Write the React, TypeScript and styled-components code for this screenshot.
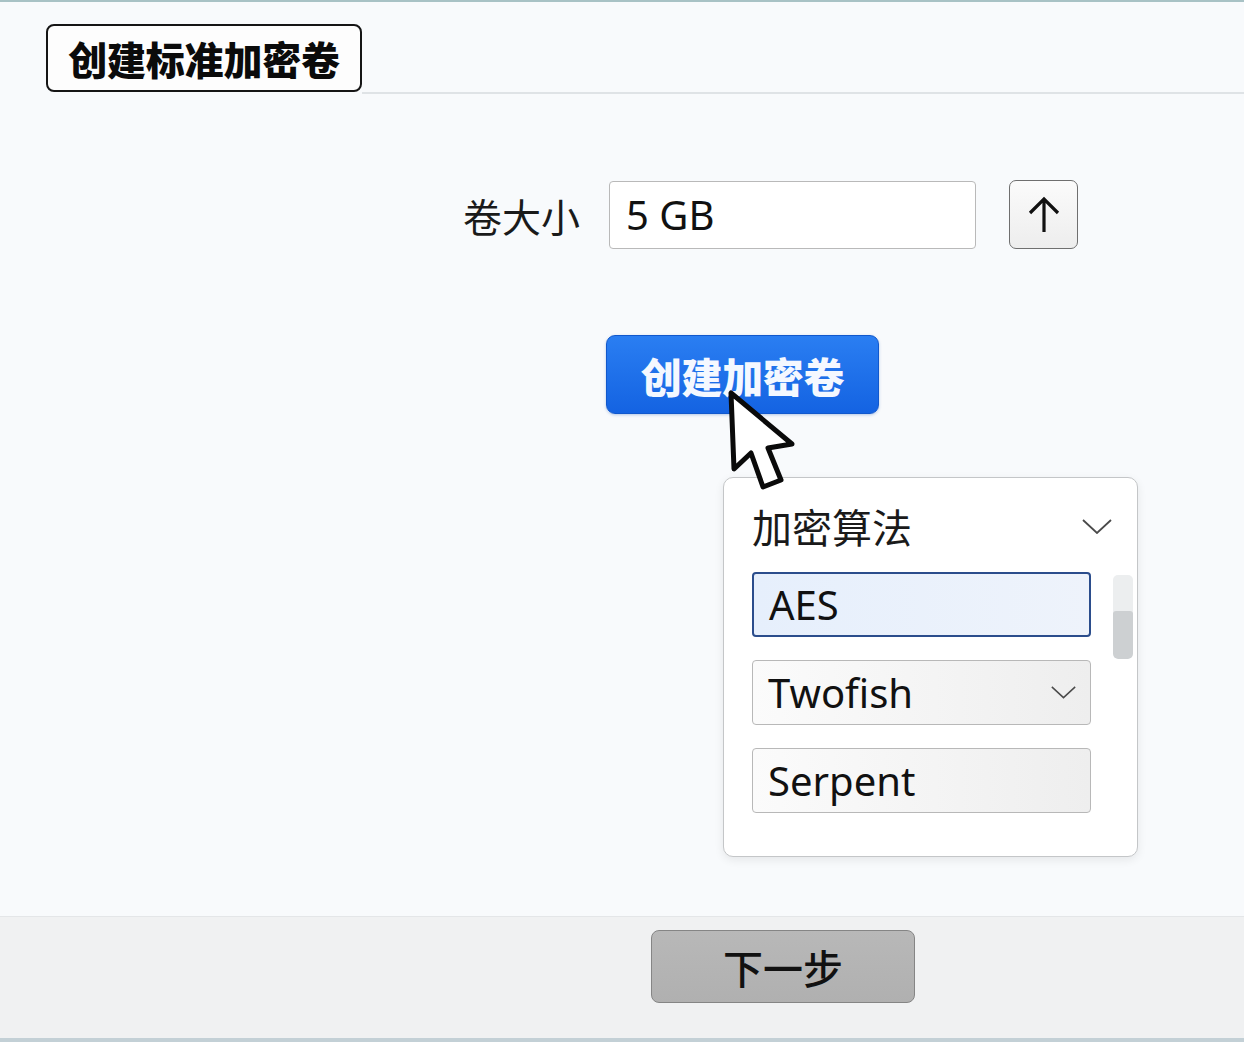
import React from 'react';
import styled, { createGlobalStyle } from 'styled-components';

const GlobalStyle = createGlobalStyle`
  html, body {
    margin: 0;
    padding: 0;
    background: #f8fafc;
  }
  body {
    font-family: "Noto Sans", "Noto Sans CJK SC", sans-serif;
    color: #111;
  }
`;

const Page = styled.div`
  width: 1244px;
  height: 1042px;
  display: flex;
  flex-direction: column;
  background: #f8fafc;
  border-top: 2px solid #a8c2c5;
  box-sizing: border-box;
  overflow: hidden;
`;

const Header = styled.div`
  display: flex;
  align-items: flex-end;
  padding: 22px 0 0 46px;
`;

const TitleBox = styled.div`
  width: 316px;
  height: 68px;
  box-sizing: border-box;
  border: 2px solid #151515;
  border-radius: 8px;
  background: #fdfdfd;
  display: flex;
  align-items: center;
  justify-content: center;
  font-family: "Noto Sans CJK SC", sans-serif;
  font-weight: 900;
  font-size: 39px;
  letter-spacing: -0.2px;
  color: #0b0b0b;
`;

const Rule = styled.div`
  flex: 1;
  height: 2px;
  margin-bottom: -2px;
  background: #dfe3e6;
`;

const Body = styled.div`
  flex: 1;
  display: flex;
  flex-direction: column;
  padding-top: 88px;
`;

const SizeRow = styled.div`
  display: flex;
  align-items: center;
  padding-left: 463px;
`;

const Label = styled.span`
  font-family: "Noto Sans CJK SC", sans-serif;
  font-size: 39px;
  color: #1a1a1a;
  width: 146px;
`;

const SizeInput = styled.div`
  width: 367px;
  height: 68px;
  box-sizing: border-box;
  border: 1.5px solid #b9b9b9;
  border-radius: 4px;
  background: #fff;
  display: flex;
  align-items: center;
  padding-left: 16px;
  font-size: 40px;
  color: #111;
`;

const IconButton = styled.button`
  margin-left: 33px;
  width: 69px;
  height: 69px;
  box-sizing: border-box;
  border: 1.5px solid #6f6f6f;
  border-radius: 7px;
  background: linear-gradient(#fbfbfb, #ededed);
  display: flex;
  align-items: center;
  justify-content: center;
  padding: 0;
`;

const Anchor = styled.div`
  position: relative;
  margin: 86px 0 0 606px;
  width: 273px;
`;

const PrimaryButton = styled.button`
  width: 273px;
  height: 79px;
  border: 1px solid #1158cc;
  border-radius: 9px;
  background: linear-gradient(#2a7ef2, #1463e2);
  color: #f4f8ff;
  font-family: "Noto Sans CJK SC", sans-serif;
  font-weight: 900;
  font-size: 41px;
  letter-spacing: -0.3px;
  padding: 0;
  box-shadow: 0 1px 3px rgba(20, 80, 180, 0.3);
`;

const Cursor = styled.svg`
  position: absolute;
  left: 121px;
  top: 54px;
  z-index: 3;
`;

const Menu = styled.div`
  position: absolute;
  left: 117px;
  top: 142px;
  width: 415px;
  height: 380px;
  box-sizing: border-box;
  border: 1.5px solid #c4c6c8;
  border-radius: 10px;
  background: #fff;
  box-shadow: 0 3px 10px rgba(0, 0, 0, 0.08);
  padding: 22px 0 0 28px;
  z-index: 2;
`;

const MenuHeader = styled.div`
  display: flex;
  align-items: center;
  justify-content: space-between;
  width: 360px;
  height: 52px;
  font-family: "Noto Sans CJK SC", sans-serif;
  font-size: 40px;
  color: #1a1a1a;
`;

const MenuBody = styled.div`
  display: flex;
  gap: 22px;
  margin-top: 20px;
`;

const OptionList = styled.div`
  display: flex;
  flex-direction: column;
  gap: 23px;
`;

const Option = styled.div<{ selected?: boolean }>`
  width: 339px;
  height: 65px;
  box-sizing: border-box;
  border: ${({ selected }) => (selected ? '2px solid #2b4d8c' : '1.5px solid #b8b8b8')};
  border-radius: 4px;
  background: ${({ selected }) =>
    selected ? 'linear-gradient(90deg, #e6effc, #eef3fb)' : 'linear-gradient(90deg, #fbfbfb, #eeeeee)'};
  display: flex;
  align-items: center;
  justify-content: space-between;
  padding: 0 14px 0 15px;
  font-size: 40px;
  color: #111;
`;

const ScrollTrack = styled.div`
  margin-top: 3px;
  width: 20px;
  height: 84px;
  border-radius: 5px;
  background: #eceeef;
  display: flex;
  flex-direction: column;
  justify-content: flex-end;
  overflow: hidden;
`;

const ScrollThumb = styled.div`
  height: 48px;
  background: #cdd0d2;
  border-radius: 3px 3px 5px 5px;
`;

const Footer = styled.div`
  height: 126px;
  box-sizing: border-box;
  background: #f0f1f2;
  border-top: 1px solid #e4e6e8;
  border-bottom: 4px solid #c3d0d6;
  padding: 13px 0 0 651px;
`;

const NextButton = styled.button`
  width: 264px;
  height: 73px;
  border: 1.5px solid #858585;
  border-radius: 8px;
  background: linear-gradient(#b8b8b8, #b0b0b0);
  font-family: "Noto Sans CJK SC", sans-serif;
  font-weight: 500;
  font-size: 40px;
  color: #111;
  padding: 0;
`;

const Chevron: React.FC<{ size: number }> = ({ size }) => (
  <svg width={size} height={size / 2} viewBox="0 0 30 15" fill="none">
    <path d="M1 1 L15 14 L29 1" stroke="#4a4a4a" strokeWidth="1.8" />
  </svg>
);

const App: React.FC = () => {
  return (
    <>
      <GlobalStyle />
      <Page>
        <Header>
          <TitleBox>创建标准加密卷</TitleBox>
          <Rule />
        </Header>

        <Body>
          <SizeRow>
            <Label>卷大小</Label>
            <SizeInput>5 GB</SizeInput>
            <IconButton>
              <svg width="34" height="38" viewBox="0 0 34 38" fill="none">
                <path d="M17 36 V3 M3 17 L17 3 L31 17" stroke="#111" strokeWidth="3.2" />
              </svg>
            </IconButton>
          </SizeRow>

          <Anchor>
            <PrimaryButton>创建加密卷</PrimaryButton>
            <Cursor width="70" height="104" viewBox="-4 -4 70 104">
              <path
                d="M0 0 L3 76 L20 60 L32 94 L50 87 L37 55 L61 51 Z"
                fill="#fff"
                stroke="#0a0a0a"
                strokeWidth="5"
                strokeLinejoin="round"
              />
            </Cursor>
            <Menu>
              <MenuHeader>
                <span>加密算法</span>
                <Chevron size={30} />
              </MenuHeader>
              <MenuBody>
                <OptionList>
                  <Option selected>AES</Option>
                  <Option>
                    Twofish
                    <Chevron size={25} />
                  </Option>
                  <Option>Serpent</Option>
                </OptionList>
                <ScrollTrack>
                  <ScrollThumb />
                </ScrollTrack>
              </MenuBody>
            </Menu>
          </Anchor>
        </Body>

        <Footer>
          <NextButton>下一步</NextButton>
        </Footer>
      </Page>
    </>
  );
};

export default App;
